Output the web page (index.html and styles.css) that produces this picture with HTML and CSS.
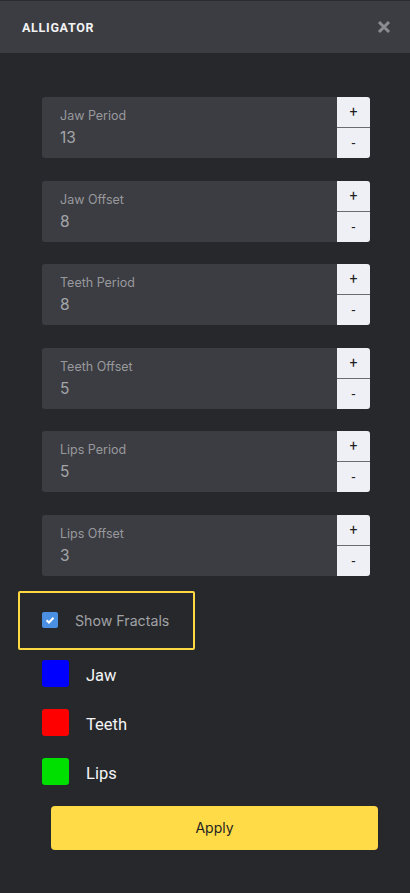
FILE: index.html
```html
<!DOCTYPE html>
<html>
<head>
<meta charset="utf-8">
<link rel="stylesheet" href="styles.css">
</head>
<body>
<div class="panel">
  <div class="header">
    <span class="title">ALLIGATOR</span>
    <svg class="close" width="14" height="14" viewBox="0 0 14 14"><path d="M2 2 L12 12 M12 2 L2 12" stroke="#8b8c91" stroke-width="3" stroke-linecap="butt"/></svg>
  </div>
  <div class="content">
    <div class="fields">
      <div class="field"><div class="fbody"><div class="label">Jaw Period</div><div class="value">13</div></div><div class="btns"><div class="btn">+</div><div class="btn">-</div></div></div>
      <div class="field"><div class="fbody"><div class="label">Jaw Offset</div><div class="value">8</div></div><div class="btns"><div class="btn">+</div><div class="btn">-</div></div></div>
      <div class="field"><div class="fbody"><div class="label">Teeth Period</div><div class="value">8</div></div><div class="btns"><div class="btn">+</div><div class="btn">-</div></div></div>
      <div class="field"><div class="fbody"><div class="label">Teeth Offset</div><div class="value">5</div></div><div class="btns"><div class="btn">+</div><div class="btn">-</div></div></div>
      <div class="field"><div class="fbody"><div class="label">Lips Period</div><div class="value">5</div></div><div class="btns"><div class="btn">+</div><div class="btn">-</div></div></div>
      <div class="field"><div class="fbody"><div class="label">Lips Offset</div><div class="value">3</div></div><div class="btns"><div class="btn">+</div><div class="btn">-</div></div></div>
    </div>
    <div class="check">
      <span class="cbox"><svg width="10" height="10" viewBox="0 0 10 10"><path d="M1.5 5.2 L4 7.5 L8.5 2.8" stroke="#fff" stroke-width="2" fill="none"/></svg></span>
      <span class="clabel">Show Fractals</span>
    </div>
    <div class="legend">
      <div class="litem"><span class="sw blue"></span><span class="lname">Jaw</span></div>
      <div class="litem"><span class="sw red"></span><span class="lname">Teeth</span></div>
      <div class="litem"><span class="sw green"></span><span class="lname">Lips</span></div>
    </div>
    <div class="apply">Apply</div>
  </div>
</div>
</body>
</html>
```
FILE: styles.css
```css
html, body {
  margin: 0;
  padding: 0;
  background: #27282c;
  font-family: Roboto, "Liberation Sans", sans-serif;
}
.panel {
  width: 410px;
  height: 893px;
  background: #27282c;
}
.header {
  height: 53px;
  background: #3c3d42;
  border-top: 1px solid #2a2b2f;
  box-sizing: border-box;
  display: flex;
  align-items: center;
  justify-content: space-between;
  padding: 0 19px 0 22px;
}
.title {
  color: #f2f2f4;
  font-size: 12.5px;
  font-weight: bold;
  letter-spacing: 0.7px;
}
.close { display: block; }
.content {
  padding-top: 44px;
}
.fields {
  display: flex;
  flex-direction: column;
  gap: 22.6px;
  padding: 0 40px 0 42px;
}
.field {
  height: 61px;
  display: flex;
  background: #3c3d42;
  border-radius: 3px;
  overflow: hidden;
}
.fbody {
  flex: 1;
  padding: 11px 0 0 18px;
  font-family: Inter, Roboto, sans-serif;
}
.label {
  font-size: 12.5px;
  color: #98999d;
  line-height: 16px;
}
.value {
  font-size: 15.5px;
  color: #a4a5a9;
  line-height: 20px;
  margin-top: 4px;
}
.btns {
  width: 33px;
  display: flex;
  flex-direction: column;
  background: #eff0f6;
}
.btn {
  flex: 1;
  display: flex;
  align-items: center;
  justify-content: center;
  color: #1e1e22;
  font-size: 14px;
}
.btn:first-child {
  border-bottom: 1.5px solid #6a6b70;
}
.check {
  margin: 15px 0 0 18px;
  width: 177px;
  height: 59px;
  box-sizing: border-box;
  border: 2px solid #fdd843;
  border-radius: 2px;
  display: flex;
  align-items: center;
  padding-left: 22px;
}
.cbox {
  width: 16px;
  height: 16px;
  background: #4a8fe1;
  border-radius: 2px;
  display: flex;
  align-items: center;
  justify-content: center;
}
.clabel {
  margin-left: 17px;
  font-size: 14.2px;
  color: #a1a2a6;
  font-family: Inter, Roboto, sans-serif;
}
.legend {
  display: flex;
  flex-direction: column;
  gap: 22px;
  padding: 10px 0 0 42px;
}
.litem {
  display: flex;
  align-items: center;
  height: 27px;
}
.sw {
  width: 27px;
  height: 27px;
  border-radius: 3px;
}
.blue { background: #0000ff; }
.red { background: #ff0000; }
.green { background: #00e000; }
.lname {
  margin-left: 17px;
  font-size: 16.5px;
  color: #f4f4f6;
  position: relative;
  top: 2px;
}
.apply {
  margin: 21px 32px 0 51px;
  height: 44px;
  background: #ffdb47;
  border-radius: 4px;
  display: flex;
  align-items: center;
  justify-content: center;
  font-size: 14px;
  color: #1f1f23;
  font-family: Inter, Roboto, sans-serif;
}
```
